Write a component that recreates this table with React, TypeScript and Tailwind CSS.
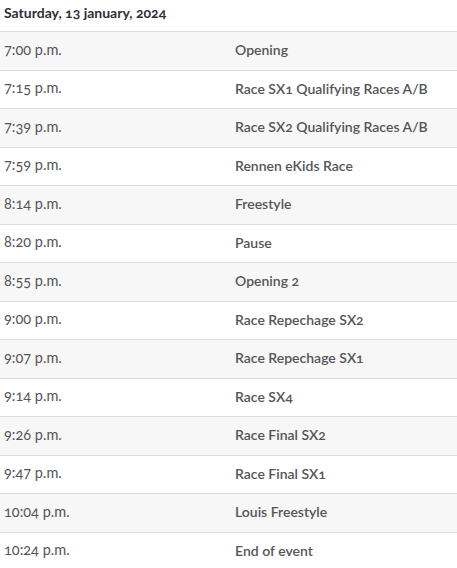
const schedule = [
  { time: "7:00 p.m.", event: "Opening" },
  { time: "7:15 p.m.", event: "Race SX1 Qualifying Races A/B" },
  { time: "7:39 p.m.", event: "Race SX2 Qualifying Races A/B" },
  { time: "7:59 p.m.", event: "Rennen eKids Race" },
  { time: "8:14 p.m.", event: "Freestyle" },
  { time: "8:20 p.m.", event: "Pause" },
  { time: "8:55 p.m.", event: "Opening 2" },
  { time: "9:00 p.m.", event: "Race Repechage SX2" },
  { time: "9:07 p.m.", event: "Race Repechage SX1" },
  { time: "9:14 p.m.", event: "Race SX4" },
  { time: "9:26 p.m.", event: "Race Final SX2" },
  { time: "9:47 p.m.", event: "Race Final SX1" },
  { time: "10:04 p.m.", event: "Louis Freestyle" },
  { time: "10:24 p.m.", event: "End of event" },
];

const App = () => {
  return (
    <div className="w-[457px] h-[568px] overflow-hidden bg-white font-['Lato',sans-serif] [font-feature-settings:'onum'] text-[#555555]">
      <div className="h-[32px] flex items-center pb-[6px] px-1 border-b border-[#dddddd] text-[14px] font-bold text-[#2f2f35]">
        Saturday, 13 january, 2024
      </div>
      {schedule.map((item, i) => (
        <div
          key={item.time}
          className={`grid grid-cols-[231px_1fr] items-center h-[38.5px] pb-[2px] border-b border-[#dddddd] text-[14.5px] px-1 ${
            i % 2 === 0 ? "bg-[#f7f7f7]" : "bg-white"
          }`}
        >
          <span>{item.time}</span>
          <span className="text-[14px] font-semibold">{item.event}</span>
        </div>
      ))}
    </div>
  );
};

export default App;
